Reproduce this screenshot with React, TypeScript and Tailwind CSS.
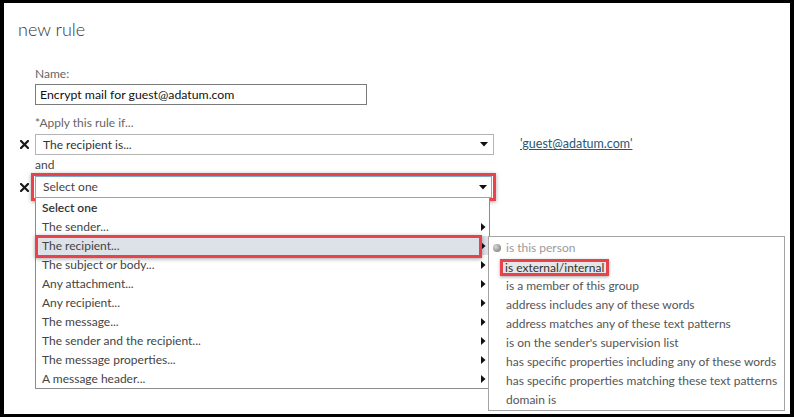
import React from 'react';

const menuItems = [
  'Select one',
  'The sender...',
  'The recipient...',
  'The subject or body...',
  'Any attachment...',
  'Any recipient...',
  'The message...',
  'The sender and the recipient...',
  'The message properties...',
  'A message header...',
];

const subItems = [
  'is this person',
  'is external/internal',
  'is a member of this group',
  'address includes any of these words',
  'address matches any of these text patterns',
  "is on the sender's supervision list",
  'has specific properties including any of these words',
  'has specific properties matching these text patterns',
  'domain is',
];

function RemoveIcon() {
  return (
    <svg width="9" height="9" viewBox="0 0 9 9" className="shrink-0">
      <path d="M1 1 L8 8 M8 1 L1 8" stroke="#1a1a1a" strokeWidth="2.2" strokeLinecap="square" />
    </svg>
  );
}

function DownArrow() {
  return (
    <svg width="8" height="5" viewBox="0 0 8 5" className="shrink-0">
      <path d="M0 0 H8 L4 4.5 Z" fill="#111" />
    </svg>
  );
}

function RightArrow() {
  return (
    <svg width="5" height="8" viewBox="0 0 5 8">
      <path d="M0 0 L4.5 4 L0 8 Z" fill="#111" />
    </svg>
  );
}

export default function App() {
  return (
    <div className="w-[794px] h-[417px] bg-black pt-[3px] pl-[4px] pr-[4px] pb-[3px] font-['Lato',sans-serif] whitespace-nowrap">
      <div className="relative h-full bg-white overflow-hidden">
        <div className="pl-[14px] pt-[14px] text-[18px] leading-[24px] font-light text-[#333]">new rule</div>

        <div className="ml-[31px]">
          <div className="mt-[25px] text-[12px] leading-[16px] text-[#666]">Name:</div>
          <div className="mt-[2px] w-[332px] h-[21px] border border-[#7a7a7a] px-[4px] text-[12.3px] leading-[19px] text-[#111]">
            Encrypt mail for guest@adatum.com
          </div>

          <div className="mt-[10px] text-[12px] leading-[16px] text-[#666]">*Apply this rule if...</div>

          <div className="mt-[3px] -ml-[15px] flex items-center">
            <div className="w-[15px] flex items-center">
              <RemoveIcon />
            </div>
            <div className="w-[459px] h-[21px] border border-[#b4b4b4] flex items-center justify-between pl-[7px] pr-[5px] text-[12px] text-[#333]">
              <span>The recipient is...</span>
              <DownArrow />
            </div>
            <span className="ml-[26px] text-[12.5px] text-[#2b5877] underline">'guest@adatum.com'</span>
          </div>

          <div className="mt-[2px] text-[12px] leading-[16px] text-[#444]">and</div>

          <div className="-ml-[15px] flex items-center">
            <div className="w-[11px] flex items-center">
              <RemoveIcon />
            </div>
            <div className="w-[465px] h-[28px] border-[3px] border-[#e8434a] pl-[1px] shadow-[0_1px_4px_rgba(0,0,0,0.35)]">
              <div className="w-[457px] h-[22px] border border-[#7fa9cc] bg-white flex items-center justify-between pl-[7px] pr-[4px] text-[12px] text-[#444]">
                <span>Select one</span>
                <DownArrow />
              </div>
            </div>
          </div>

          <div className="mt-[218px] text-[12px] leading-[16px] text-[#444]">Properties of this rule:</div>
        </div>

        {/* open dropdown list */}
        <div className="absolute left-[31px] top-[195px] w-[455px] border-x border-b border-[#8c8c8c] bg-white">
          {menuItems.map((item, i) => (
            <div
              key={item}
              className={
                'h-[19px] flex items-center justify-between pl-[6px] pr-[3px] text-[12px] ' +
                (i === 0 ? 'font-semibold text-[#333]' : i === 2 ? 'bg-[#dde1e8] text-[#444]' : 'text-[#444]')
              }
            >
              <span>{item}</span>
              {i > 0 && <RightArrow />}
            </div>
          ))}
        </div>
        <div className="absolute left-[31px] top-[232px] w-[447px] h-[23px] border-[3px] border-[#e8434a] shadow-[0_1px_4px_rgba(0,0,0,0.35)]" />

        {/* submenu */}
        <div className="absolute left-[484px] top-[233px] w-[297px] border border-[#a3a3a3] bg-white py-[1px]">
          {subItems.map((item, i) => (
            <div key={item} className="relative h-[19px] flex items-center pl-[17px] text-[12px] text-[#555]">
              {i === 0 && (
                <span className="absolute left-[4px] top-[6px] w-[8px] h-[8px] rounded-full bg-[radial-gradient(circle_at_35%_35%,#d8d8d8,#6e6e6e)]" />
              )}
              {i === 1 ? (
                <span className="-ml-[6px] mt-[2px] px-[2px] h-[17px] leading-[11px] border-[3px] border-[#e8434a] bg-[#e6e6e6] text-[#333] shadow-[0_1px_3px_rgba(0,0,0,0.35)]">
                  {item}
                </span>
              ) : (
                <span className={i === 0 ? 'text-[#9a9a9a]' : ''}>{item}</span>
              )}
            </div>
          ))}
        </div>
      </div>
    </div>
  );
}
